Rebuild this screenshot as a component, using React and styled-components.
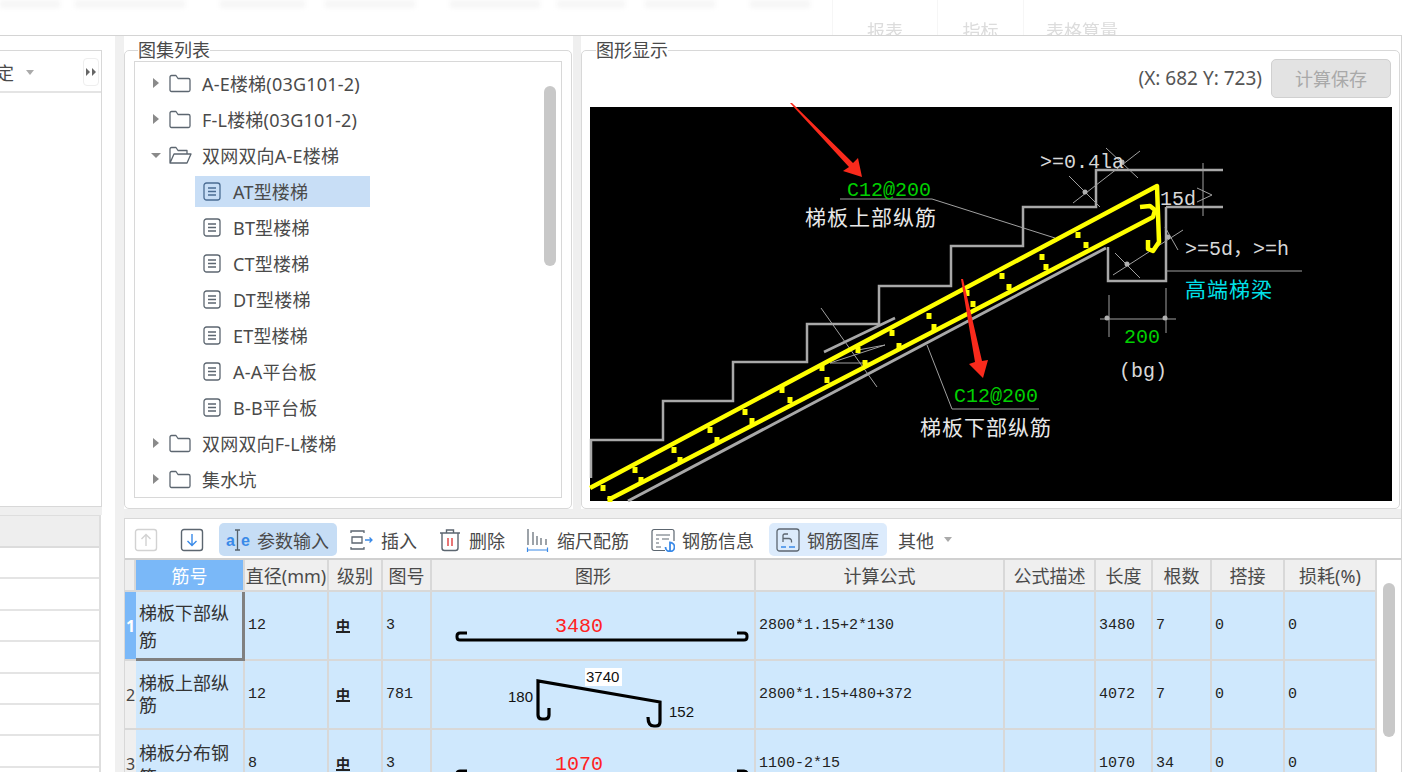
import React from 'react'
import styled, { createGlobalStyle } from 'styled-components'

const GlobalStyle = createGlobalStyle`
  html, body {
    margin: 0;
    background: #fff;
  }
  body {
    font-family: "Noto Sans", "Noto Sans CJK SC", sans-serif;
    color: #4a4a4a;
  }
`

const monoStack = `"Liberation Mono", "Noto Sans CJK SC", monospace`

const Page = styled.div`
  width: 1404px;
  height: 772px;
  overflow: hidden;
  display: flex;
  flex-direction: column;
  background: #fff;
`

/* faded ribbon at the top */
const TopStrip = styled.div`
  height: 35px;
  flex: none;
  display: flex;
  overflow: hidden;
`

const SmudgeRow = styled.div`
  width: 832px;
  height: 9px;
  display: flex;
`

const Smudge = styled.div`
  width: ${p => p.$width}px;
  margin-left: ${p => p.$gap}px;
  height: 8px;
  background: #f6f6f6;
  filter: blur(2px);
`

const RibbonTab = styled.div`
  width: ${p => p.$width}px;
  box-sizing: border-box;
  padding-top: 19px;
  border-left: 1px solid #f6f6f6;
  text-align: center;
  font-size: 18px;
  line-height: 24px;
  color: #dcdcdc;
  filter: blur(0.5px);
`

const Workspace = styled.div`
  flex: 1;
  width: 1402px;
  min-height: 0;
  box-sizing: border-box;
  display: flex;
  border-top: 1px solid #d4d4d4;
  border-right: 1px solid #d4d4d4;
`

/* left column, cut off by the window edge */
const LeftColumn = styled.div`
  width: 102px;
  flex: none;
  display: flex;
  flex-direction: column;
  padding-top: 14px;
  box-sizing: border-box;
`

const LeftPanel = styled.div`
  height: 457px;
  box-sizing: border-box;
  border: 1px solid #d8d8d8;
  border-left: 0;
`

const LeftHeader = styled.div`
  height: 42px;
  box-sizing: border-box;
  padding-top: 2px;
  display: flex;
  align-items: center;
  border-bottom: 2px solid #e4e4e4;
  font-size: 18px;
`

const LeftValue = styled.span`
  margin-left: -4px;
  margin-right: 12px;
`

const ExpandButton = styled.div`
  width: 16px;
  height: 28px;
  margin-left: auto;
  margin-right: 2px;
  box-sizing: border-box;
  border: 1px solid #eee;
  border-radius: 4px;
  display: flex;
  align-items: center;
  justify-content: center;
`

const LeftBand = styled.div`
  height: 8px;
  background: #efefef;
`

const LeftTable = styled.div`
  flex: 1;
  width: 101px;
  box-sizing: border-box;
  border-right: 2px solid #dedede;
  border-top: 1px solid #dedede;
  overflow: hidden;
`

const LeftHead = styled.div`
  height: 32px;
  box-sizing: border-box;
  background: #eee;
  border-bottom: 2px solid #dcdcdc;
`

const LeftRow = styled.div`
  height: 31.4px;
  box-sizing: border-box;
  border-bottom: 2px solid #e4e4e4;
`

const SideSplitter = styled.div`
  width: 9px;
  margin-left: 13px;
  flex: none;
  background: #f0f0f0;
`

const RightColumn = styled.div`
  width: 1277px;
  flex: none;
  display: flex;
  flex-direction: column;
`

const UpperRow = styled.div`
  height: 473px;
  flex: none;
  display: flex;
  box-sizing: border-box;
`

const MiddleSplitter = styled.div`
  width: 8px;
  margin-left: 1px;
  flex: none;
  background: #efefef;
`

const GroupBox = styled.fieldset`
  width: ${p => p.$width}px;
  flex: none;
  box-sizing: border-box;
  margin: 5px 0 0;
  padding: ${p => p.$padTop}px ${p => p.$pad}px 0;
  min-width: 0;
  border: 1px solid #d8d8d8;
  border-radius: 5px;
`

const GroupTitle = styled.legend`
  margin-left: ${p => p.$indent}px;
  padding: 0;
  font-size: 18px;
  line-height: 18px;
  color: #4a4a4a;
`

/* tree */
const TreeBox = styled.div`
  height: 437px;
  box-sizing: border-box;
  border: 1px solid #d8d8d8;
  display: flex;
`

const TreeList = styled.div`
  flex: 1;
  padding-top: 3px;
`

const TreeRow = styled.div`
  height: 36px;
  display: flex;
  align-items: center;
  font-size: 18px;
  letter-spacing: 0.2px;
  white-space: nowrap;
`

const TreeArrow = styled.svg`
  width: 10px;
  height: 10px;
  margin-left: 16px;
  margin-right: 8px;
  flex: none;
`

const FolderIcon = styled.svg`
  width: 23px;
  height: 19px;
  margin-right: 10px;
  flex: none;
`

const LeafItem = styled.div`
  width: 175px;
  height: 31px;
  margin-left: 60px;
  display: flex;
  align-items: center;
  background: ${p => (p.$selected ? '#c8def6' : 'transparent')};
`

const DocIcon = styled.svg`
  width: 18px;
  height: 19px;
  margin-left: 8px;
  margin-right: 12px;
  flex: none;
`

const ScrollThumb = styled.div`
  width: 12px;
  height: ${p => p.$height}px;
  margin: ${p => p.$top}px ${p => p.$right}px 0 ${p => p.$left}px;
  flex: none;
  background: #c8c8c8;
  border-radius: 6px;
`

/* drawing panel */
const GraphicHeader = styled.div`
  height: 48px;
  display: flex;
  align-items: flex-start;
  justify-content: flex-end;
  gap: 9px;
`

const Coordinates = styled.span`
  font-size: 19px;
  line-height: 39px;
  color: #555;
`

const SaveButton = styled.button`
  width: 120px;
  height: 39px;
  padding: 0 0 2px;
  box-sizing: border-box;
  border: 1px solid #d0d0d0;
  border-radius: 5px;
  background: #e3e3e3;
  color: #a9a9a9;
  font-family: inherit;
  font-size: 18px;
`

const CadCanvas = styled.svg`
  display: block;
  width: 802px;
  height: 394px;
  background: #000;
  overflow: visible;
`

const CadText = styled.text`
  font-family: ${monoStack};
  font-size: 20px;
  fill: ${p => p.$color};
`

const CadLabel = styled.text`
  font-family: "Noto Sans CJK SC", sans-serif;
  font-size: 21px;
  letter-spacing: 1px;
  fill: ${p => p.$color};
`

const Band = styled.div`
  height: 9px;
  flex: none;
  background: #efefef;
`

/* rebar table panel */
const BottomPanel = styled.div`
  flex: 1;
  min-height: 0;
  overflow: hidden;
  border-top: 1px solid #d8d8d8;
  border-left: 1px solid #d8d8d8;
`

const Toolbar = styled.div`
  height: 41px;
  box-sizing: border-box;
  border-bottom: 2px solid #d0d0d0;
  display: flex;
  align-items: center;
  padding: 2px 0 0 9px;
`

const ArrowButton = styled.svg`
  width: 24px;
  height: 24px;
  margin-right: ${p => p.$after}px;
  flex: none;
`

const ToolItem = styled.div`
  height: 33px;
  margin-right: ${p => p.$after ?? 7}px;
  padding: 0 ${p => (p.$active ? 8 : 7)}px 0 7px;
  display: flex;
  align-items: center;
  gap: 7px;
  border-radius: 5px;
  background: ${p => p.$active || 'transparent'};
  font-size: 18px;
  white-space: nowrap;
`

const ToolIcon = styled.svg`
  width: 24px;
  height: 24px;
  flex: none;
`

const Caret = styled.svg`
  width: 8px;
  height: 5px;
  margin-left: 3px;
`

const TableArea = styled.div`
  display: flex;
  align-items: flex-start;
`

const RebarTable = styled.table`
  width: 1252px;
  table-layout: fixed;
  border-collapse: separate;
  border-spacing: 0;
  flex: none;
`

const HeadCell = styled.th`
  height: 32px;
  padding: 0;
  box-sizing: border-box;
  background: ${p => (p.$active ? '#7ab8f8' : '#efefef')};
  color: ${p => (p.$active ? '#fff' : '#4a4a4a')};
  border-right: 2px solid #d8d8d8;
  border-bottom: 2px solid #d8d8d8;
  font-size: 18px;
  font-weight: 400;
  white-space: nowrap;
  overflow: hidden;
`

const RowNumber = styled.td`
  padding: 0;
  background: ${p => (p.$active ? '#7ab8f8' : '#efefef')};
  color: ${p => (p.$active ? '#fff' : '#444')};
  font-weight: ${p => (p.$active ? 700 : 400)};
  border-bottom: 2px solid #d8d8d8;
  font-size: 16px;
  text-align: center;
  overflow: hidden;
`

const Cell = styled.td`
  height: 69px;
  padding: 0 3px 1px;
  box-sizing: border-box;
  background: #cfe8fd;
  border-right: 2px solid #d8d8d8;
  border-bottom: 2px solid #d8d8d8;
  font-family: ${monoStack};
  font-size: 15px;
  color: #222;
  white-space: nowrap;
`

const NameCell = styled(Cell)`
  padding-top: ${p => p.$drop}px;
  padding-bottom: ${p => p.$lift}px;
  font-family: "Noto Sans CJK SC", sans-serif;
  font-size: 18px;
  line-height: ${p => p.$lineHeight}px;
  white-space: normal;
  color: #333;
  border-right: ${p => (p.$focused ? '3px solid #808080' : '2px solid #d8d8d8')};
  border-bottom: ${p => (p.$focused ? '3px solid #808080' : '2px solid #d8d8d8')};
`

const ShapeCell = styled(Cell)`
  padding: 0;
`

const GradeMark = styled.span`
  display: inline-block;
  margin-left: 4px;
  padding-top: 4px;
  font-family: "Noto Sans CJK SC", sans-serif;
  font-size: 14px;
  font-weight: 700;
  line-height: 12px;
  border-bottom: 2px solid #222;
  color: #222;
`

const ShapeSvg = styled.svg`
  display: block;
  width: 322px;
  height: 67px;
`

const ShapeLength = styled.text`
  font-family: ${monoStack};
  font-size: 20px;
  fill: #f22;
`

const ShapeDim = styled.text`
  font-family: "Liberation Sans", sans-serif;
  font-size: 15px;
  fill: #111;
`

const ribbonSmudges = [
  [60, 0], [110, 15], [85, 35], [90, 20], [90, 35], [68, 17], [70, 20], [60, 35],
]

const ribbonTabs = [['报表', 105], ['指标', 86], ['表格算量', 117]]

const treeRows = [
  { type: 'closed', label: 'A-E楼梯(03G101-2)' },
  { type: 'closed', label: 'F-L楼梯(03G101-2)' },
  { type: 'open', label: '双网双向A-E楼梯' },
  { type: 'leaf', label: 'AT型楼梯', selected: true },
  { type: 'leaf', label: 'BT型楼梯' },
  { type: 'leaf', label: 'CT型楼梯' },
  { type: 'leaf', label: 'DT型楼梯' },
  { type: 'leaf', label: 'ET型楼梯' },
  { type: 'leaf', label: 'A-A平台板' },
  { type: 'leaf', label: 'B-B平台板' },
  { type: 'closed', label: '双网双向F-L楼梯' },
  { type: 'closed', label: '集水坑' },
]

const columns = [
  ['', 11], ['筋号', 109], ['直径(mm)', 84], ['级别', 54], ['图号', 49], ['图形', 324],
  ['计算公式', 249], ['公式描述', 91], ['长度', 57], ['根数', 59], ['搭接', 73], ['损耗(%)', 92],
]

const rebarRows = [
  { name: '梯板下部纵筋', lineHeight: 27, drop: 2, lift: 0, dia: 12, fig: 3, formula: '2800*1.15+2*130', len: 3480, count: 7, shape: 'bar', barLength: 3480, focused: true },
  { name: '梯板上部纵筋', lineHeight: 22, drop: 0, lift: 4, dia: 12, fig: 781, formula: '2800*1.15+480+372', len: 4072, count: 7, shape: 'hooked' },
  { name: '梯板分布钢筋', lineHeight: 24, drop: 0, lift: 0, dia: 8, fig: 3, formula: '1100-2*15', len: 1070, count: 34, shape: 'bar', barLength: 1070 },
]

// stair profile and slab, in canvas coordinates
const stairPoints = '1,371 1,333 73,333 73,294 143,294 143,255 217,255 217,217 289,217 289,179 361,179 361,139 433,139 433,100 506,100 506,63 633,63'

// pairs of dots between the two bars
const stirrupDots = [
  [13, 381], [20, 392], [45, 363], [51, 373], [84, 343], [90, 353], [120, 323], [127, 333],
  [155, 305], [162, 314], [192, 283], [200, 293], [232, 261], [237, 273], [268, 243], [275, 256],
  [302, 226], [309, 239], [339, 209], [344, 220], [377, 186], [383, 197], [412, 169], [419, 180],
  [452, 150], [456, 160], [488, 128], [496, 138],
]

const thinLines = [
  [250, 92, 342, 92], [342, 92, 465, 131], [337, 238, 362, 302], [362, 302, 449, 302],
  [231, 201, 287, 280], [240, 256, 295, 238], [268, 243, 295, 238], [240, 256, 285, 256],
  [516, 41, 548, 71], [550, 44, 483, 96], [479, 69, 510, 100],
  [613, 56, 613, 109], [607, 81, 622, 88], [607, 95, 622, 88],
  [593, 123, 523, 168], [575, 120, 588, 143], [525, 146, 550, 171],
  [576, 164, 712, 164], [519, 188, 519, 230], [576, 181, 576, 226], [510, 212, 586, 212],
]

const dimDots = [[532, 55], [495, 85], [578, 130], [537, 157], [517, 211], [575, 211]]

function CadDrawing() {
  return (
    <CadCanvas viewBox="0 0 802 394">
      <g fill="none" stroke="#a8a8a8" strokeWidth="2.5">
        <polyline points={stairPoints} />
        <polyline points="576,100 633,100" />
        <polyline points="576,100 576,174 518,174 518,140" />
        <line x1="234" y1="245" x2="305" y2="211" />
      </g>
      <line x1="516" y1="141" x2="38" y2="394" stroke="#a8a8a8" strokeWidth="3" />
      <g stroke="#a0a0a0" strokeWidth="1">
        {thinLines.map(([x1, y1, x2, y2], i) => (
          <line key={i} x1={x1} y1={y1} x2={x2} y2={y2} />
        ))}
      </g>
      {dimDots.map(([cx, cy], i) => (
        <circle key={i} cx={cx} cy={cy} r="2.5" fill="#b0b0b0" />
      ))}
      <g fill="none" stroke="#ffff00" strokeWidth="4.5" strokeLinejoin="round">
        <polyline points="0,381 567,79 569,135 563,144 558,142 558,133" />
        <polyline points="18,393 410,190 563,110 565,103 560,99 550,100" />
      </g>
      <g fill="#ffff00">
        {stirrupDots.map(([x, y], i) => (
          <rect key={i} x={x - 2.5} y={y - 3} width="5" height="6" />
        ))}
      </g>
      <CadText x="257" y="89" $color="#00d000">C12@200</CadText>
      <CadLabel x="215" y="118" $color="#e8e8e8">梯板上部纵筋</CadLabel>
      <CadText x="364" y="295" $color="#00d000">C12@200</CadText>
      <CadLabel x="330" y="328" $color="#e8e8e8">梯板下部纵筋</CadLabel>
      <CadText x="450" y="61" $color="#d8d8d8">&gt;=0.4la</CadText>
      <CadText x="570" y="98" $color="#d8d8d8">15d</CadText>
      <CadText x="595" y="148" $color="#d8d8d8">&gt;=5d，&gt;=h</CadText>
      <CadLabel x="595" y="190" $color="#00e0e8">高端梯梁</CadLabel>
      <CadText x="534" y="236" $color="#00d000">200</CadText>
      <CadText x="529" y="270" $color="#d8d8d8">(bg)</CadText>
      <g fill="#fa2a1c">
        <polygon points="200,-4 202,-4 263,56 268,51 272,70 253,64 259,60" />
        <polygon points="371,172 373,172 392,254 398,253 393,271 379,257 385,255" />
      </g>
    </CadCanvas>
  )
}

function TreeEntry({ row }) {
  if (row.type === 'leaf') {
    return (
      <TreeRow>
        <LeafItem $selected={row.selected}>
          <DocIcon viewBox="0 0 18 19" fill="none" stroke={row.selected ? '#4a6c92' : '#5c6670'} strokeWidth="1.3">
            <rect x="1" y="1" width="16" height="17" rx="2.5" />
            <path d="M5 6h8M5 9.5h8M5 13h8" />
          </DocIcon>
          {row.label}
        </LeafItem>
      </TreeRow>
    )
  }
  const open = row.type === 'open'
  return (
    <TreeRow>
      <TreeArrow viewBox="0 0 10 10" fill="#8a8a8a">
        {open ? <path d="M0 3h10L5 8z" /> : <path d="M2 0l6 5-6 5z" />}
      </TreeArrow>
      <FolderIcon viewBox="0 0 23 19" fill="none" stroke="#5c6670" strokeWidth="1.3">
        {open ? (
          <path d="M1 17V3a1.5 1.5 0 0 1 1.5-1.5H7l2 3h9v3M1 17l4-9h17l-4 9z" strokeLinejoin="round" />
        ) : (
          <path d="M1 3a1.5 1.5 0 0 1 1.5-1.5H7l2 3h10.5A1.5 1.5 0 0 1 21 6v10a1.5 1.5 0 0 1-1.5 1.5h-17A1.5 1.5 0 0 1 1 16z" strokeLinejoin="round" />
        )}
      </FolderIcon>
      {row.label}
    </TreeRow>
  )
}

function RebarShape({ row }) {
  if (row.shape === 'hooked') {
    return (
      <ShapeSvg viewBox="0 0 322 67">
        <path d="M117 47V54q0 4-4 4h-3q-4 0-4-4V20L228 41V61q0 4-4 4h-2q-6 0-6-9" fill="none" stroke="#000" strokeWidth="3.2" />
        <rect x="153" y="7" width="37" height="18" fill="#fff" />
        <ShapeDim x="154" y="21">3740</ShapeDim>
        <ShapeDim x="76" y="41">180</ShapeDim>
        <ShapeDim x="237" y="56">152</ShapeDim>
      </ShapeSvg>
    )
  }
  return (
    <ShapeSvg viewBox="0 0 322 67">
      <path d="M35 41H28q-3 0-3 3v1q0 3 3 3H312q3 0 3-3v-1q0-3-3-3H305" fill="none" stroke="#000" strokeWidth="3" />
      <ShapeLength x="123" y="40">{row.barLength}</ShapeLength>
    </ShapeSvg>
  )
}

export default function App() {
  return (
    <Page>
      <GlobalStyle />
      <TopStrip>
        <SmudgeRow>
          {ribbonSmudges.map(([width, gap], i) => (
            <Smudge key={i} $width={width} $gap={gap} />
          ))}
        </SmudgeRow>
        {ribbonTabs.map(([label, width]) => (
          <RibbonTab key={label} $width={width}>{label}</RibbonTab>
        ))}
      </TopStrip>
      <Workspace>
        <LeftColumn>
          <LeftPanel>
            <LeftHeader>
              <LeftValue>定</LeftValue>
              <svg width="8" height="5" viewBox="0 0 8 5"><path d="M0 0h8L4 5z" fill="#aaa" /></svg>
              <ExpandButton>
                <svg width="10" height="8" viewBox="0 0 10 8" fill="#666">
                  <path d="M0 0l4 4-4 4zM6 0l4 4-4 4z" />
                </svg>
              </ExpandButton>
            </LeftHeader>
          </LeftPanel>
          <LeftBand />
          <LeftTable>
            <LeftHead />
            {[0, 1, 2, 3, 4, 5, 6].map(i => <LeftRow key={i} />)}
          </LeftTable>
        </LeftColumn>
        <SideSplitter />
        <RightColumn>
          <UpperRow>
            <GroupBox $width={448} $pad={9} $padTop={2}>
              <GroupTitle $indent={4}>图集列表</GroupTitle>
              <TreeBox>
                <TreeList>
                  {treeRows.map(row => <TreeEntry key={row.label} row={row} />)}
                </TreeList>
                <ScrollThumb $height={180} $top={24} $right={5} $left={0} />
              </TreeBox>
            </GroupBox>
            <MiddleSplitter />
            <GroupBox $width={819} $pad={8} $padTop={0}>
              <GroupTitle $indent={6}>图形显示</GroupTitle>
              <GraphicHeader>
                <Coordinates>(X: 682 Y: 723)</Coordinates>
                <SaveButton>计算保存</SaveButton>
              </GraphicHeader>
              <CadDrawing />
            </GroupBox>
          </UpperRow>
          <Band />
          <BottomPanel>
            <Toolbar>
              <ArrowButton viewBox="0 0 24 24" $after={22} fill="none" stroke="#d2d2d2" strokeWidth="1.4">
                <rect x="1.5" y="1.5" width="21" height="21" rx="2.5" />
                <path d="M12 18V6.5M7.5 11L12 6.5l4.5 4.5" />
              </ArrowButton>
              <ArrowButton viewBox="0 0 24 24" $after={15} fill="none" stroke="#5c6670" strokeWidth="1.4">
                <rect x="1.5" y="1.5" width="21" height="21" rx="2.5" />
                <path d="M12 6v11.5M7.5 13l4.500 4.500 4.500-4.500" stroke="#3a8ae8" />
              </ArrowButton>
              <ToolItem $active="#c6ddf5" $after={6}>
                <ToolIcon viewBox="0 0 24 24">
                  <text x="0" y="18" fontFamily="Liberation Sans" fontSize="16" fontWeight="700" fill="#3a8ae8">a</text>
                  <text x="15" y="18" fontFamily="Liberation Sans" fontSize="16" fontWeight="700" fill="#3a8ae8">e</text>
                  <path d="M9 2h5M11.500 2v20M9 22h5" stroke="#55606a" strokeWidth="1.3" fill="none" />
                </ToolIcon>
                参数输入
              </ToolItem>
              <ToolItem $after={7}>
                <ToolIcon viewBox="0 0 24 24" fill="none" stroke="#5c6670" strokeWidth="1.3">
                  <path d="M1 5V3h13v2M2 9h10v6H2zM1 19v2h13v-2" />
                  <path d="M15 12h7M19.500 9.500L22 12l-2.500 2.500" stroke="#3a8ae8" />
                </ToolIcon>
                插入
              </ToolItem>
              <ToolItem>
                <ToolIcon viewBox="0 0 24 24" fill="none" stroke="#5c6670" strokeWidth="1.4">
                  <path d="M2 5h20M8.500 5V2h7v3M4 5v15a2.500 2.500 0 0 0 2.500 2.500h11A2.500 2.500 0 0 0 20 20V5" />
                  <path d="M10 10v8M14 10v8" stroke="#e03c3c" />
                </ToolIcon>
                删除
              </ToolItem>
              <ToolItem $after={8}>
                <ToolIcon viewBox="0 0 24 24" fill="none" stroke="#5c6670" strokeWidth="1.2">
                  <path d="M2 1v16M7 4v13M11 8v9M15 10v7M20 11v6" />
                  <path d="M1 22h21M1.500 19.500v5M21.500 19.500v5" stroke="#3a8ae8" />
                </ToolIcon>
                缩尺配筋
              </ToolItem>
              <ToolItem $after={8}>
                <ToolIcon viewBox="0 0 24 24" fill="none" stroke="#5c6670" strokeWidth="1.2">
                  <path d="M14 22.500H3a2 2 0 0 1-2-2v-17a2 2 0 0 1 2-2h18a2 2 0 0 1 2 2V13" />
                  <path d="M5 7h14M5 11h3M11 11h7M5 15h3M5 19h5" />
                  <path d="M14.500 19a4.500 4.500 0 1 0 4.500-4.500v9" stroke="#3a8ae8" strokeWidth="1.8" />
                </ToolIcon>
                钢筋信息
              </ToolItem>
              <ToolItem $active="#dcebfc" $after={4}>
                <ToolIcon viewBox="0 0 24 24" fill="none" stroke="#5c6670" strokeWidth="1.3">
                  <rect x="1" y="1" width="22" height="22" rx="2.5" />
                  <path d="M7 14V7.500a1.500 1.500 0 0 1 1.500-1.500H12M7 10.500h6a2.500 2.500 0 0 1 2.500 2.500v1.500" />
                  <path d="M5 19h5M13 19h6" stroke="#3a8ae8" />
                </ToolIcon>
                钢筋图库
              </ToolItem>
              <ToolItem>
                其他
                <Caret viewBox="0 0 8 5"><path d="M0 0h8L4 5z" fill="#aaa" /></Caret>
              </ToolItem>
            </Toolbar>
            <TableArea>
              <RebarTable>
                <colgroup>
                  {columns.map(([label, width]) => <col key={label} width={width} />)}
                </colgroup>
                <thead>
                  <tr>
                    {columns.map(([label], i) => (
                      <HeadCell key={label} $active={i === 1}>{label}</HeadCell>
                    ))}
                  </tr>
                </thead>
                <tbody>
                  {rebarRows.map((row, i) => (
                    <tr key={row.name}>
                      <RowNumber $active={i === 0}>{i + 1}</RowNumber>
                      <NameCell $lineHeight={row.lineHeight} $drop={row.drop} $lift={row.lift} $focused={row.focused}>{row.name}</NameCell>
                      <Cell>{row.dia}</Cell>
                      <Cell><GradeMark>中</GradeMark></Cell>
                      <Cell>{row.fig}</Cell>
                      <ShapeCell><RebarShape row={row} /></ShapeCell>
                      <Cell>{row.formula}</Cell>
                      <Cell />
                      <Cell>{row.len}</Cell>
                      <Cell>{row.count}</Cell>
                      <Cell>0</Cell>
                      <Cell>0</Cell>
                    </tr>
                  ))}
                </tbody>
              </RebarTable>
              <ScrollThumb $height={154} $top={23} $right={0} $left={6} />
            </TableArea>
          </BottomPanel>
        </RightColumn>
      </Workspace>
    </Page>
  )
}
